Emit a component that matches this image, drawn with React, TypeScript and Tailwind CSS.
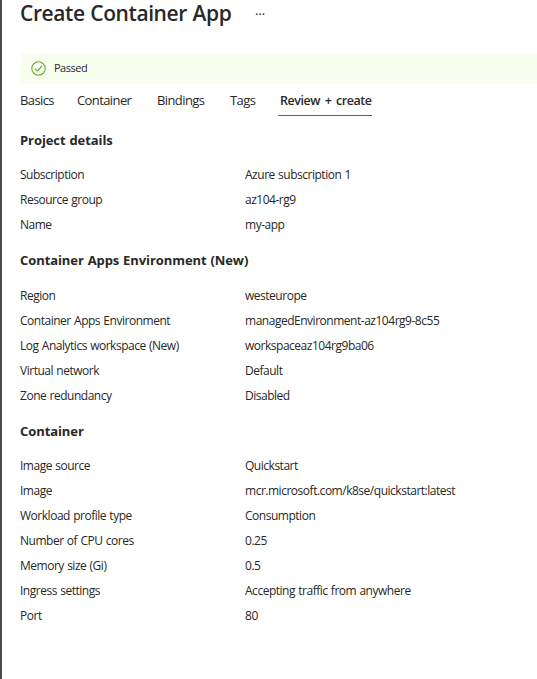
import React from "react";

type Row = [label: string, value: string];
type Group = { title: string; head: string; rows: Row[] };

const groups: Group[] = [
  {
    title: "Project details",
    head: "h-[49px] pb-[15px]",
    rows: [
      ["Subscription", "Azure subscription 1"],
      ["Resource group", "az104-rg9"],
      ["Name", "my-app"],
    ],
  },
  {
    title: "Container Apps Environment (New)",
    head: "h-[46px] pb-[16px]",
    rows: [
      ["Region", "westeurope"],
      ["Container Apps Environment", "managedEnvironment-az104rg9-8c55"],
      ["Log Analytics workspace (New)", "workspaceaz104rg9ba06"],
      ["Virtual network", "Default"],
      ["Zone redundancy", "Disabled"],
    ],
  },
  {
    title: "Container",
    head: "h-[45px] pb-[15px]",
    rows: [
      ["Image source", "Quickstart"],
      ["Image", "mcr.microsoft.com/k8se/quickstart:latest"],
      ["Workload profile type", "Consumption"],
      ["Number of CPU cores", "0.25"],
      ["Memory size (Gi)", "0.5"],
      ["Ingress settings", "Accepting traffic from anywhere"],
      ["Port", "80"],
    ],
  },
];

function PassedIcon() {
  return (
    <svg className="h-[15px] w-[15px]" viewBox="0 0 15 15" fill="none" stroke="#6bab2f">
      <circle cx="7.5" cy="7.5" r="6.7" strokeWidth="1.1" />
      <path d="M4 7.8 6.4 10 11 4.9" strokeWidth="1.2" />
    </svg>
  );
}

export default function App() {
  return (
    <main className="h-[679px] w-[537px] overflow-hidden border-l-2 border-[#4c4b52] bg-white pl-[18px] font-['Open_Sans',sans-serif] text-xs tracking-[-0.48px] whitespace-nowrap text-[#292827] [word-spacing:0.6px]">
      <header className="flex h-[53px] items-start">
        <h1 className="w-[235px] text-[21px] leading-[26px] font-semibold tracking-[-0.41px]">Create Container App</h1>
        <span className="pt-px text-[13px] leading-[18px] tracking-normal">…</span>
      </header>
      <div className="flex h-[31px] items-center gap-2 bg-[#f8fff0] pl-[11px] text-[11px] tracking-[-0.5px]">
        <PassedIcon />
        <span className="pb-px">Passed</span>
      </div>
      <nav className="flex h-8 items-stretch text-[13px] leading-[33px] tracking-[-0.6px]">
        <span className="w-[57px]">Basics</span>
        <span className="w-[80px]">Container</span>
        <span className="w-[73px]">Bindings</span>
        <span className="w-[48px]">Tags</span>
        <span className="w-[94px] border-b border-[#0078d4] pl-[2px] text-[12.5px] font-semibold tracking-[-0.48px] [word-spacing:2px]">Review + create</span>
      </nav>
      {groups.map((g) => (
        <section key={g.title}>
          <h2 className={`${g.head} flex items-end text-[13px] leading-[20px] font-bold tracking-[-0.08px]`}>{g.title}</h2>
          {g.rows.map(([label, value]) => (
            <div key={label} className="flex h-[25px] items-center pb-[5px]">
              <span className="w-[225px]">{label}</span>
              <span>{value}</span>
            </div>
          ))}
        </section>
      ))}
    </main>
  );
}
